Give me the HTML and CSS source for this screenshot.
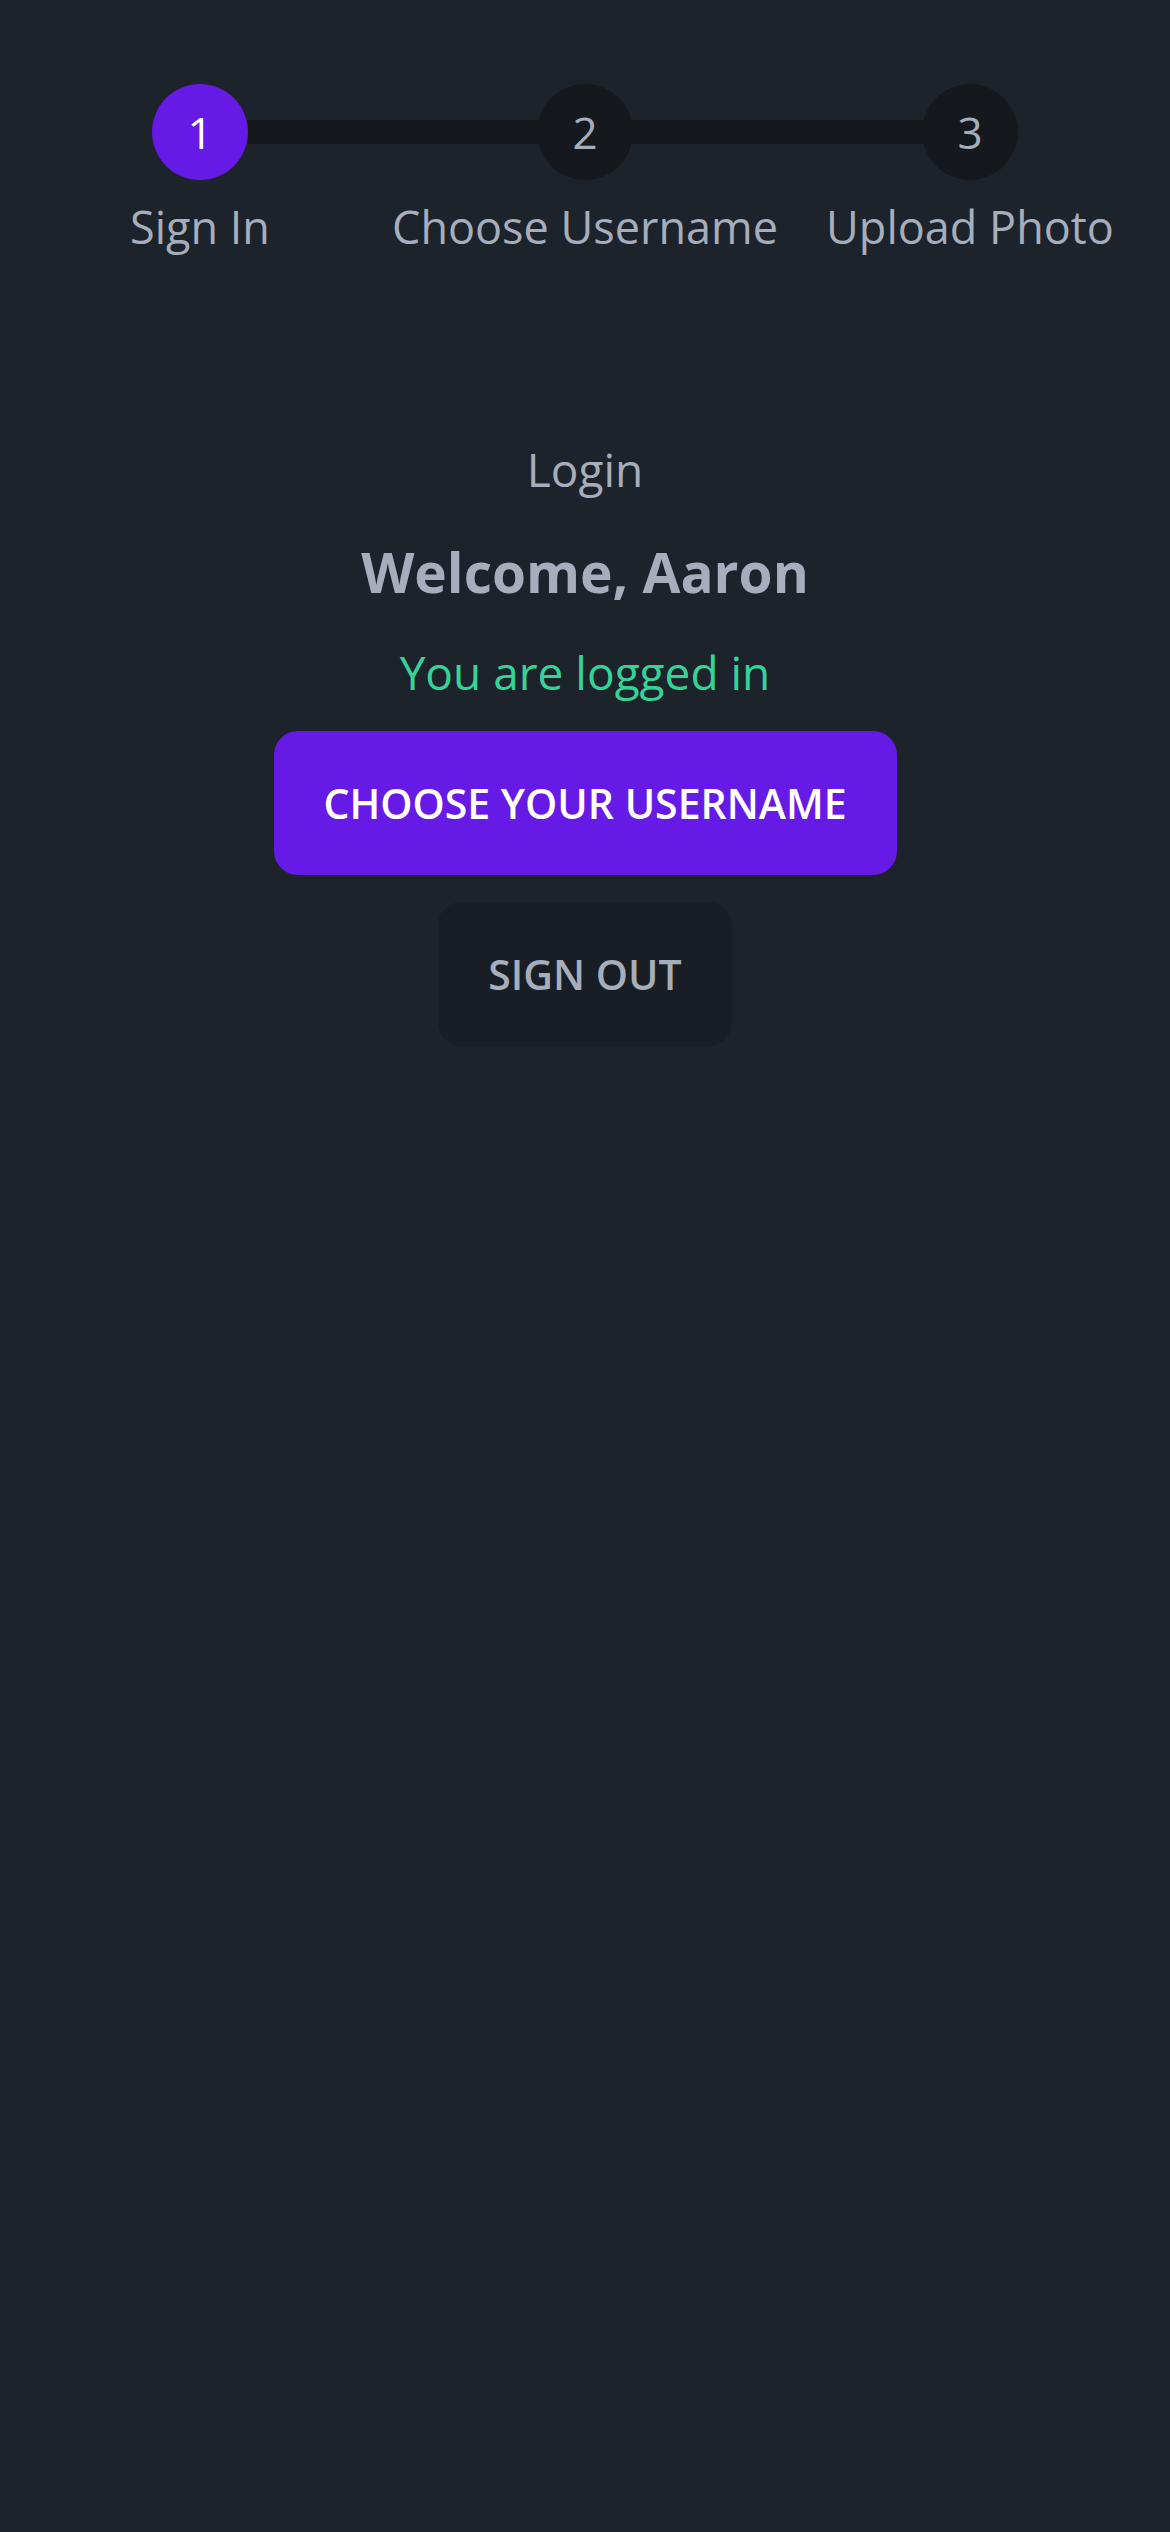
FILE: index.html
```html
<!DOCTYPE html>
<html lang="en">
<head>
<meta charset="utf-8">
<title>Login</title>
<link rel="stylesheet" href="styles.css">
</head>
<body>
<ul class="steps">
  <li class="step active"><span class="circle">1</span><span class="label">Sign In</span></li>
  <li class="step"><span class="circle">2</span><span class="label">Choose Username</span></li>
  <li class="step"><span class="circle">3</span><span class="label">Upload Photo</span></li>
</ul>
<main class="panel">
  <p class="title">Login</p>
  <h1 class="welcome">Welcome, Aaron</h1>
  <p class="status">You are logged in</p>
  <button class="btn btn-primary">CHOOSE YOUR USERNAME</button>
  <button class="btn btn-neutral">SIGN OUT</button>
</main>
</body>
</html>
```
FILE: styles.css
```css
html {
  background: #1d232a;
}
body {
  margin: 8px;
  background: #1d232a;
  color: #a6adbb;
  font-family: "Open Sans", "Noto Sans", sans-serif;
  font-size: 48px;
  min-height: 2516px;
}
.steps {
  list-style: none;
  margin: 64px 0 0 0;
  padding: 0;
  display: grid;
  grid-template-columns: repeat(3, 1fr);
}
.step {
  position: relative;
  display: grid;
  grid-template-rows: 120px auto;
  justify-items: center;
  align-items: center;
}
.step + .step::before {
  content: "";
  position: absolute;
  top: 48px;
  left: -50%;
  width: 100%;
  height: 24px;
  background: #15191e;
  z-index: 0;
}
.circle {
  position: relative;
  z-index: 1;
  width: 96px;
  height: 96px;
  border-radius: 50%;
  background: #15191e;
  color: #a6adbb;
  display: flex;
  align-items: center;
  justify-content: center;
  font-size: 44px;
  line-height: 1;
}
.step.active .circle {
  background: #661ae6;
  color: #ffffff;
}
.label {
  align-self: start;
  font-size: 45px;
  line-height: 60px;
  margin-top: 5px;
  white-space: nowrap;
}
.panel {
  display: flex;
  flex-direction: column;
  align-items: center;
  margin-top: 176px;
}
.title {
  margin: 0;
  font-size: 46px;
  line-height: 72px;
}
.welcome {
  margin: 27px 0 0 0;
  font-size: 55px;
  font-weight: 700;
  line-height: 80px;
}
.status {
  margin: 24px 0 0 0;
  color: #36d399;
  font-size: 46px;
  line-height: 72px;
}
.btn {
  font-family: inherit;
  border: none;
  border-radius: 24px;
  height: 144px;
  padding: 0 48px;
  font-size: 41px;
  font-weight: 600;
  cursor: pointer;
}
.btn-primary {
  margin-top: 23px;
  background: #661ae6;
  color: #ffffff;
  width: 623px;
}
.btn-neutral {
  margin-top: 27px;
  background: #191d24;
  color: #a6adbb;
  width: 294px;
}
```
